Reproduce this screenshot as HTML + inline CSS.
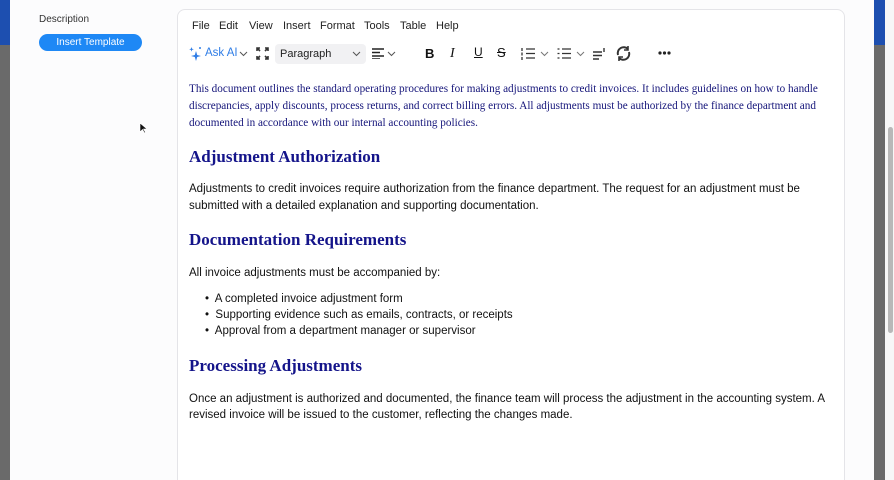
<!DOCTYPE html>
<html><head><meta charset="utf-8"><style>
*{box-sizing:border-box;margin:0;padding:0}
html,body{width:894px;height:480px;overflow:hidden}
body{background:#fcfcfd;font-family:"Liberation Sans",sans-serif;position:relative;color:#111}
.ls{position:absolute;left:0;top:0;width:10px;height:480px;background:#6a6a6a}
.ls:before{content:"";position:absolute;left:0;top:0;width:10px;height:45px;background:#1d4fb0}
.rs{position:absolute;left:874px;top:0;width:11px;height:480px;background:#6a6a6a}
.rs:before{content:"";position:absolute;left:0;top:0;width:11px;height:45px;background:#1d4fb0}
.rw{position:absolute;left:885px;top:0;width:9px;height:480px;background:#f7f7f7}
.thumb{position:absolute;left:888px;top:127px;width:5px;height:206px;border-radius:3px;background:#b8b8b8}
.desc{position:absolute;left:39px;top:14px;font-size:10px;color:#333}
.btn{position:absolute;left:39px;top:34px;width:103px;height:17px;border-radius:9px;background:#1e88f5;color:#fff;font-size:10px;text-align:center;line-height:17px}
.ed{position:absolute;left:177px;top:9px;width:668px;height:471px;border:1px solid #e4e4e8;border-bottom:none;border-radius:8px 8px 0 0;background:#fff}
.menu{position:absolute;top:20px;font-size:11px;color:#222}
.c{position:absolute;white-space:nowrap}
.p1{left:189px;font-family:"Liberation Serif",serif;font-size:11.2px;color:#15157a}
.h{left:189px;font-family:"Liberation Serif",serif;font-weight:bold;font-size:17px;color:#14148a}
.b{left:189px;font-size:11.5px;color:#111}
</style></head><body>
<div class="ls"></div><div class="rs"></div><div class="rw"></div><div class="thumb"></div>
<div class="desc">Description</div>
<div class="btn">Insert Template</div>
<div class="ed"></div>
<div class="menu" style="left:192px">File</div>
<div class="menu" style="left:219px">Edit</div>
<div class="menu" style="left:249px">View</div>
<div class="menu" style="left:283px">Insert</div>
<div class="menu" style="left:320px">Format</div>
<div class="menu" style="left:364px">Tools</div>
<div class="menu" style="left:400px">Table</div>
<div class="menu" style="left:436px">Help</div>
<svg style="position:absolute;left:188px;top:45px" width="16" height="18" viewBox="0 0 16 18"><path d="M8 6 L9.2 10 L13 11 L9.2 12 L8 16 L6.8 12 L3 11 L6.8 10Z" fill="#2f7de6"/><path d="M3.5 2 L4.1 3.7 L5.8 4.3 L4.1 4.9 L3.5 6.6 L2.9 4.9 L1.2 4.3 L2.9 3.7Z" fill="#2f7de6"/><circle cx="12" cy="3" r="1" fill="#2f7de6"/></svg>
<div class="c" style="left:205px;top:47px;font-size:11.5px;color:#2f7de6">Ask AI</div>
<svg style="position:absolute;left:239px;top:50px" width="9" height="7"><path d="M1 2l3.5 3.5L8 2" stroke="#555" fill="none"/></svg>
<svg style="position:absolute;left:256px;top:47px" width="13" height="13" viewBox="0 0 13 13" stroke="#333" stroke-width="1.6" fill="none"><path d="M1 4V1h3M9 1h3v3M12 9v3H9M4 12H1V9M1 1l3 3M12 1L9 4M12 12L9 9M1 12l3-3"/></svg>
<div style="position:absolute;left:275px;top:44px;width:91px;height:20px;background:#f1f1f3;border-radius:4px"></div>
<div class="c" style="left:280px;top:48px;font-size:11px;color:#222">Paragraph</div>
<svg style="position:absolute;left:352px;top:50px" width="9" height="7"><path d="M1 2l3.5 3.5L8 2" stroke="#555" fill="none"/></svg>
<svg style="position:absolute;left:372px;top:48px" width="13" height="11" stroke="#222" stroke-width="1.5"><path d="M0 1h12M0 4.5h8M0 8h12M0 11h8"/></svg>
<svg style="position:absolute;left:387px;top:50px" width="9" height="7"><path d="M1 2l3.5 3.5L8 2" stroke="#555" fill="none"/></svg>
<div class="c" style="left:425px;top:46px;font-size:13px;font-weight:bold">B</div>
<div class="c" style="left:450px;top:46px;font-size:14px;font-style:italic;font-family:'Liberation Serif',serif">I</div>
<div class="c" style="left:474px;top:45px;font-size:12px;text-decoration:underline">U</div>
<div class="c" style="left:497px;top:45px;font-size:13px;text-decoration:line-through">S</div>
<svg style="position:absolute;left:521px;top:47px" width="14" height="13" stroke="#333" stroke-width="1.3"><path d="M5 2h9M5 6.5h9M5 11h9M1 1v3M1 5.5v3M1 10v3"/></svg>
<svg style="position:absolute;left:540px;top:50px" width="9" height="7"><path d="M1 2l3.5 3.5L8 2" stroke="#777" fill="none"/></svg>
<svg style="position:absolute;left:557px;top:47px" width="14" height="13" stroke="#333" stroke-width="1.3"><path d="M5 2h9M5 6.5h9M5 11h9M0.5 2h2M0.5 6.5h2M0.5 11h2"/></svg>
<svg style="position:absolute;left:576px;top:50px" width="9" height="7"><path d="M1 2l3.5 3.5L8 2" stroke="#777" fill="none"/></svg>
<svg style="position:absolute;left:593px;top:47px" width="13" height="13" stroke="#333" stroke-width="1.4"><path d="M0 5h9M0 8.5h9M0 12h6M11 1v4"/></svg>
<svg style="position:absolute;left:615px;top:45px" width="17" height="17" viewBox="0 0 17 17" stroke="#333" stroke-width="2" fill="none"><path d="M3 10a6 6 0 0 1 10-6M14 7a6 6 0 0 1-10 6"/><path d="M13 1v4H9M4 16v-4h4" stroke-width="1.6"/></svg>
<svg style="position:absolute;left:658px;top:51px" width="13" height="4" fill="#222"><circle cx="2" cy="2" r="1.6"/><circle cx="6.5" cy="2" r="1.6"/><circle cx="11" cy="2" r="1.6"/></svg>
<div class="c p1" style="top:83px">This document outlines the standard operating procedures for making adjustments to credit invoices. It includes guidelines on how to handle</div>
<div class="c p1" style="top:100px">discrepancies, apply discounts, process returns, and correct billing errors. All adjustments must be authorized by the finance department and</div>
<div class="c p1" style="top:117px">documented in accordance with our internal accounting policies.</div>
<div class="c h" style="top:147px">Adjustment Authorization</div>
<div class="c b" style="top:183px">Adjustments to credit invoices require authorization from the finance department. The request for an adjustment must be</div>
<div class="c b" style="top:200px">submitted with a detailed explanation and supporting documentation.</div>
<div class="c h" style="top:230px">Documentation Requirements</div>
<div class="c b" style="top:267px">All invoice adjustments must be accompanied by:</div>
<div class="c b" style="top:293px;left:205px">•&nbsp; A completed invoice adjustment form</div>
<div class="c b" style="top:309px;left:205px">•&nbsp; Supporting evidence such as emails, contracts, or receipts</div>
<div class="c b" style="top:325px;left:205px">•&nbsp; Approval from a department manager or supervisor</div>
<div class="c h" style="top:356px">Processing Adjustments</div>
<div class="c b" style="top:393px">Once an adjustment is authorized and documented, the finance team will process the adjustment in the accounting system. A</div>
<div class="c b" style="top:409px">revised invoice will be issued to the customer, reflecting the changes made.</div>
<svg style="position:absolute;left:139px;top:122px" width="8" height="12"><path d="M1 1v9l2.5-2.5 2 3.5 1-.6-2-3.4H8Z" fill="#111" stroke="#fff" stroke-width=".6"/></svg>
</body></html>
